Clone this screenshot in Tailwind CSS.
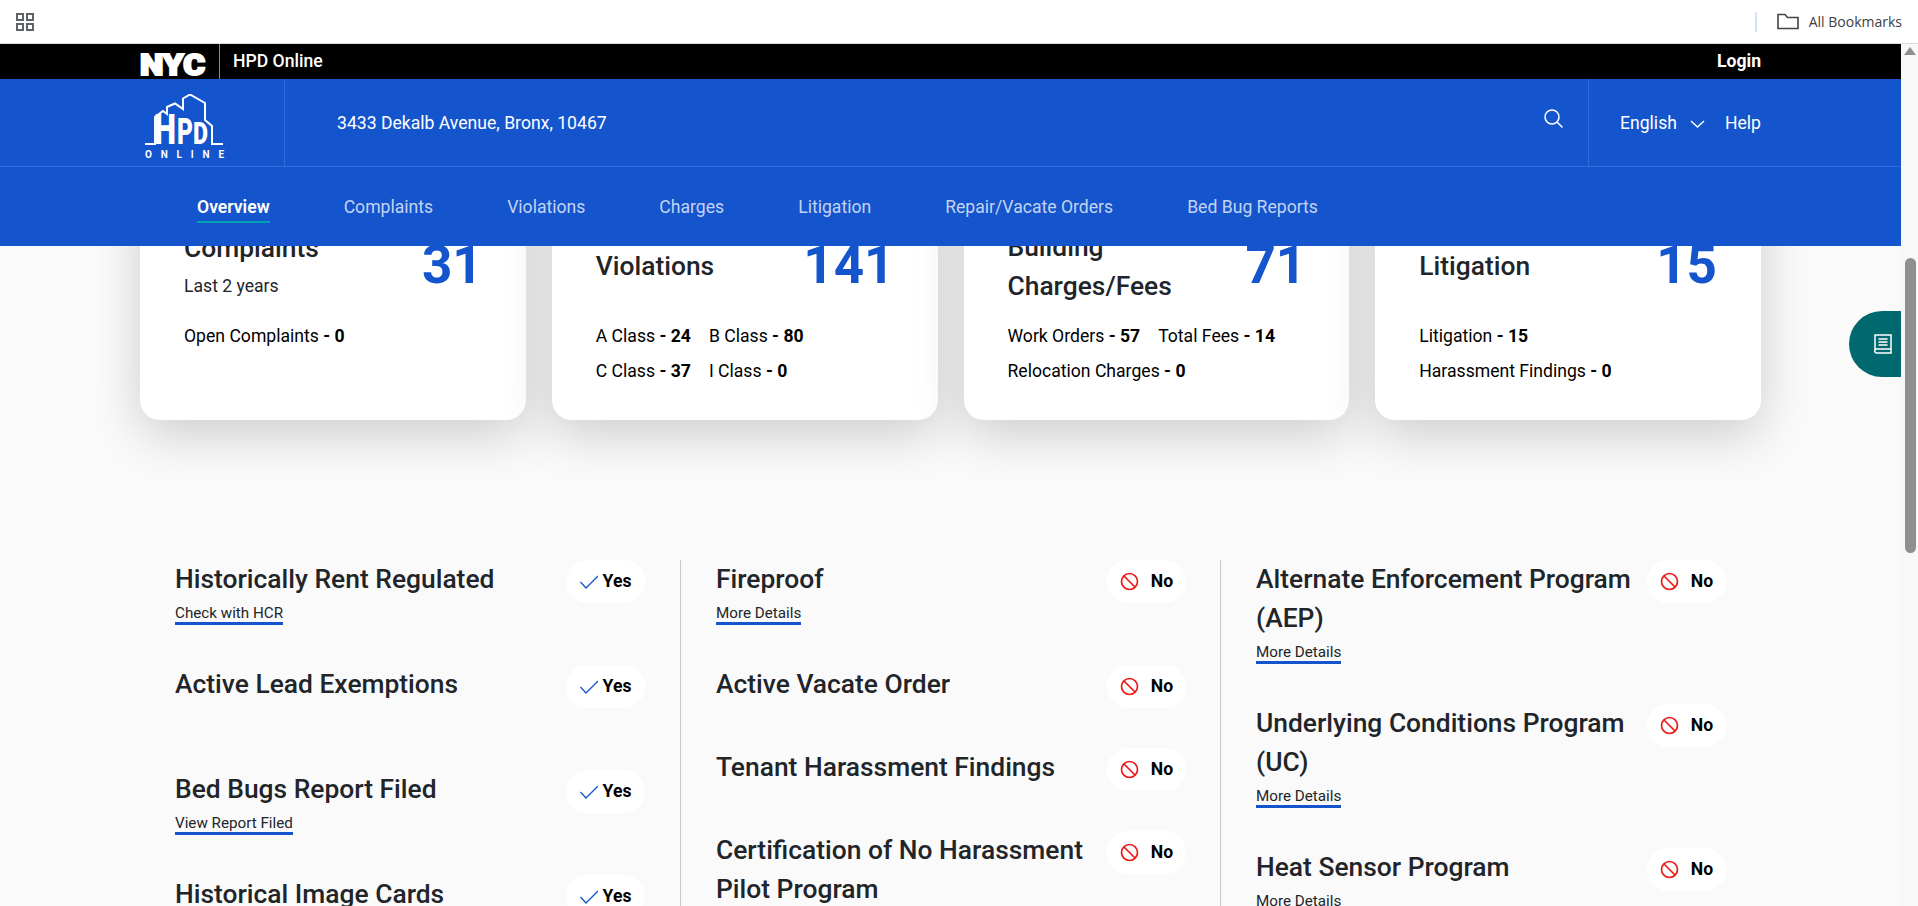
<!DOCTYPE html>
<html lang="en">
<head>
    <meta charset="UTF-8">
    <title>HPD Online</title>
    <script src="https://cdn.jsdelivr.net/npm/@tailwindcss/browser@4"></script>
</head>
<body class="h-[906px] overflow-hidden bg-[#fafafa] font-['Roboto',sans-serif] text-[17.6px] text-[#212529]">
    <!-- browser bookmarks bar -->
    <div class="h-11 bg-white border-b border-[#dcdcdc] flex items-center pl-4 pr-4">
        <svg class="w-[18px] h-[18px] text-[#5f6368]" viewBox="0 0 18 18" fill="none" stroke="currentColor" stroke-width="2"><rect x="1" y="1" width="6" height="6"/><rect x="11" y="1" width="6" height="6"/><rect x="1" y="11" width="6" height="6"/><rect x="11" y="11" width="6" height="6"/></svg>
        <div class="ml-auto w-[2px] h-5 bg-[#d3e3fd]"></div>
        <svg class="ml-5 w-[22px] h-[17px] text-[#444]" viewBox="0 0 22 17" fill="none" stroke="currentColor" stroke-width="1.6"><path d="M1 15.5V1.5h7l2.5 3H21v11z"/></svg>
        <span class="ml-[10px] text-[14px] text-[#3c4043] font-['Open_Sans',sans-serif]">All Bookmarks</span>
    </div>

    <div class="flex h-[862px]">
        <div class="relative flex-1 overflow-hidden">
            <!-- site header -->
            <header class="relative z-10">
                <div class="h-[35px] bg-black flex items-center pl-[140px] pr-[140px] text-white">
                    <svg class="w-[79px] h-[35px] shrink-0" viewBox="0 0 79 35" fill="white" stroke="white" stroke-width="2"><text x="0" y="31" font-family="Roboto" font-weight="900" font-size="29" textLength="65" lengthAdjust="spacingAndGlyphs">NYC</text></svg>
                    <div class="w-px h-[35px] bg-[#888]"></div>
                    <span class="ml-[13px] font-medium">HPD Online</span>
                    <span class="ml-auto font-bold">Login</span>
                </div>
                <div class="bg-[#1454cc] text-white">
                    <div class="h-[88px] flex items-center border-b border-[#2f6bdc]">
                        <div class="w-[285px] h-full border-r border-[#2f6bdc] pl-[145px] pt-[15px]">
                            <svg width="80" height="66" viewBox="0 0 80 66" fill="white">
                                <path d="M0 50H10V23l8-6 4 3v-7l8-3.500 8 5.500V4.500l7-4 15 8.500v17l7 6v18h11" fill="none" stroke="white" stroke-width="2"/>
                                <text x="9" y="50" font-family="Roboto" font-weight="900" font-size="42" textLength="22" lengthAdjust="spacingAndGlyphs">H</text>
                                <text x="32" y="50" font-family="Roboto" font-weight="900" font-size="36" textLength="16" lengthAdjust="spacingAndGlyphs">P</text>
                                <text x="48" y="50" font-family="Roboto" font-weight="900" font-size="32" textLength="15" lengthAdjust="spacingAndGlyphs">D</text>
                                <text x="0" y="64" font-family="Roboto" font-weight="700" font-size="10" textLength="79">ONLINE</text>
                            </svg>
                        </div>
                        <span class="ml-[52px] pt-[2px]">3433 Dekalb Avenue, Bronx, 10467</span>
                        <svg class="ml-auto mb-[10px] w-5 h-5" viewBox="0 0 20 20" fill="none" stroke="currentColor" stroke-width="1.500" stroke-linecap="round"><circle cx="9" cy="9" r="7"/><path d="M14 14l5 5"/></svg>
                        <div class="ml-[25px] h-full w-[313px] border-l border-[#2f6bdc] flex items-center pt-[2px] pl-[31px] pr-[140px]">
                            <span>English</span>
                            <svg class="ml-[13px] w-[15px] h-2" viewBox="0 0 15 8" fill="none" stroke="currentColor" stroke-width="1.500"><path d="M1 1l6.500 6L14 1"/></svg>
                            <span class="ml-auto">Help</span>
                        </div>
                    </div>
                    <nav class="h-[79px] flex pl-[197px] pt-[27px] gap-[74px] text-[#c3d3f2]">
                        <a class="h-[29px] font-semibold text-white border-b-2 border-[#00a3b4]">Overview</a>
                        <a>Complaints</a>
                        <a>Violations</a>
                        <a>Charges</a>
                        <a>Litigation</a>
                        <a>Repair/Vacate Orders</a>
                        <a>Bed Bug Reports</a>
                    </nav>
                </div>
            </header>

            <!-- summary cards, scrolled partly under the header -->
            <section class="-mt-[66px] grid grid-cols-4 gap-[26px] pl-[140px] pr-[140px]">
                <div class="h-[240px] bg-white rounded-[20px] shadow-[0_15px_50px_rgba(0,0,0,0.18)] pl-11 pr-11 pt-[49px] relative">
                    <h2 class="text-[26.4px] leading-[39px] font-medium">Complaints</h2>
                    <p class="mt-[5px]">Last 2 years</p>
                    <p class="mt-[24px] text-black">Open Complaints <b class="font-bold">- 0</b></p>
                    <span class="absolute right-[43px] top-[57px] text-[53px] leading-[56px] font-bold text-[#1454cc]">31</span>
                </div>
                <div class="h-[240px] bg-white rounded-[20px] shadow-[0_15px_50px_rgba(0,0,0,0.18)] pl-11 pr-11 pt-[67px] relative">
                    <h2 class="text-[26.4px] leading-[39px] font-medium">Violations</h2>
                    <p class="mt-[33px] leading-[35px] flex gap-[18px] text-black"><span>A Class <b class="font-bold">- 24</b></span><span>B Class <b class="font-bold">- 80</b></span></p>
                    <p class="leading-[35px] flex gap-[18px] text-black"><span>C Class <b class="font-bold">- 37</b></span><span>I Class <b class="font-bold">- 0</b></span></p>
                    <span class="absolute right-[43px] top-[57px] text-[53px] leading-[56px] font-bold text-[#1454cc]">141</span>
                </div>
                <div class="h-[240px] bg-white rounded-[20px] shadow-[0_15px_50px_rgba(0,0,0,0.18)] pl-11 pr-11 pt-[48px] relative">
                    <h2 class="text-[26.4px] leading-[39px] font-medium">Building<br>Charges/Fees</h2>
                    <p class="mt-[13px] leading-[35px] flex gap-[18px] text-black"><span>Work Orders <b class="font-bold">- 57</b></span><span>Total Fees <b class="font-bold">- 14</b></span></p>
                    <p class="leading-[35px] text-black">Relocation Charges <b class="font-bold">- 0</b></p>
                    <span class="absolute right-[43px] top-[57px] text-[53px] leading-[56px] font-bold text-[#1454cc]">71</span>
                </div>
                <div class="h-[240px] bg-white rounded-[20px] shadow-[0_15px_50px_rgba(0,0,0,0.18)] pl-11 pr-11 pt-[67px] relative">
                    <h2 class="text-[26.4px] leading-[39px] font-medium">Litigation</h2>
                    <p class="mt-[33px] leading-[35px] text-black">Litigation <b class="font-bold">- 15</b></p>
                    <p class="leading-[35px] text-black">Harassment Findings <b class="font-bold">- 0</b></p>
                    <span class="absolute right-[44px] top-[57px] text-[53px] leading-[56px] font-bold text-[#1454cc]">15</span>
                </div>
            </section>

            <!-- building status lists -->
            <section class="mt-[140px] flex pl-[175px] h-[400px]">
                <div class="w-[506px] pr-[35px] border-r border-[#c8c8c8]">
                    <div class="flex justify-between mb-10"><div><h3 class="text-[26.4px] leading-[39px] font-medium">Historically Rent Regulated</h3><a class="block w-fit h-[26px] pt-[3px] text-[15.2px] leading-[22px] border-b-[3px] border-[#1454cc]">Check with HCR</a></div><span class="h-[43px] w-[79px] rounded-[21px] bg-white shrink-0 flex items-center justify-center gap-[5px] font-bold text-black"><svg class="w-[18px] h-[14px] text-[#1454cc]" viewBox="0 0 18 14" fill="none" stroke="currentColor" stroke-width="1.300"><path d="M0.500 7l5.500 6L18 1"/></svg>Yes</span></div>
                    <div class="flex justify-between mb-10"><div><h3 class="text-[26.4px] leading-[39px] font-medium">Active Lead Exemptions</h3><div class="h-[26px]"></div></div><span class="h-[43px] w-[79px] rounded-[21px] bg-white shrink-0 flex items-center justify-center gap-[5px] font-bold text-black"><svg class="w-[18px] h-[14px] text-[#1454cc]" viewBox="0 0 18 14" fill="none" stroke="currentColor" stroke-width="1.300"><path d="M0.500 7l5.500 6L18 1"/></svg>Yes</span></div>
                    <div class="flex justify-between mb-10"><div><h3 class="text-[26.4px] leading-[39px] font-medium">Bed Bugs Report Filed</h3><a class="block w-fit h-[26px] pt-[3px] text-[15.2px] leading-[22px] border-b-[3px] border-[#1454cc]">View Report Filed</a></div><span class="h-[43px] w-[79px] rounded-[21px] bg-white shrink-0 flex items-center justify-center gap-[5px] font-bold text-black"><svg class="w-[18px] h-[14px] text-[#1454cc]" viewBox="0 0 18 14" fill="none" stroke="currentColor" stroke-width="1.300"><path d="M0.500 7l5.500 6L18 1"/></svg>Yes</span></div>
                    <div class="flex justify-between mb-10"><div><h3 class="text-[26.4px] leading-[39px] font-medium">Historical Image Cards</h3></div><span class="h-[43px] w-[79px] rounded-[21px] bg-white shrink-0 flex items-center justify-center gap-[5px] font-bold text-black"><svg class="w-[18px] h-[14px] text-[#1454cc]" viewBox="0 0 18 14" fill="none" stroke="currentColor" stroke-width="1.300"><path d="M0.500 7l5.500 6L18 1"/></svg>Yes</span></div>
                </div>
                <div class="w-[540px] pl-[35px] pr-[34px] border-r border-[#c8c8c8]">
                    <div class="flex justify-between mb-10"><div><h3 class="text-[26.4px] leading-[39px] font-medium">Fireproof</h3><a class="block w-fit h-[26px] pt-[3px] text-[15.2px] leading-[22px] border-b-[3px] border-[#1454cc]">More Details</a></div><span class="h-[43px] w-[79px] rounded-[21px] bg-white shrink-0 flex items-center justify-center gap-[12px] font-bold text-black"><svg class="w-[19px] h-[19px] text-[#f01818]" viewBox="0 0 19 19" fill="none" stroke="currentColor" stroke-width="1.700"><circle cx="9.500" cy="9.500" r="8"/><path d="M4 4l11 11"/></svg>No</span></div>
                    <div class="flex justify-between mb-10"><h3 class="text-[26.4px] leading-[39px] font-medium">Active Vacate Order</h3><span class="h-[43px] w-[79px] rounded-[21px] bg-white shrink-0 flex items-center justify-center gap-[12px] font-bold text-black"><svg class="w-[19px] h-[19px] text-[#f01818]" viewBox="0 0 19 19" fill="none" stroke="currentColor" stroke-width="1.700"><circle cx="9.500" cy="9.500" r="8"/><path d="M4 4l11 11"/></svg>No</span></div>
                    <div class="flex justify-between mb-10"><h3 class="text-[26.4px] leading-[39px] font-medium">Tenant Harassment Findings</h3><span class="h-[43px] w-[79px] rounded-[21px] bg-white shrink-0 flex items-center justify-center gap-[12px] font-bold text-black"><svg class="w-[19px] h-[19px] text-[#f01818]" viewBox="0 0 19 19" fill="none" stroke="currentColor" stroke-width="1.700"><circle cx="9.500" cy="9.500" r="8"/><path d="M4 4l11 11"/></svg>No</span></div>
                    <div class="flex justify-between mb-10 gap-4"><h3 class="text-[26.4px] leading-[39px] font-medium">Certification of No Harassment Pilot Program</h3><span class="h-[43px] w-[79px] rounded-[21px] bg-white shrink-0 flex items-center justify-center gap-[12px] font-bold text-black"><svg class="w-[19px] h-[19px] text-[#f01818]" viewBox="0 0 19 19" fill="none" stroke="currentColor" stroke-width="1.700"><circle cx="9.500" cy="9.500" r="8"/><path d="M4 4l11 11"/></svg>No</span></div>
                </div>
                <div class="w-[505px] pl-[35px]">
                    <div class="flex justify-between mb-10 gap-3"><div><h3 class="text-[26.4px] leading-[39px] font-medium">Alternate Enforcement Program (AEP)</h3><a class="block w-fit h-[26px] pt-[3px] text-[15.2px] leading-[22px] border-b-[3px] border-[#1454cc]">More Details</a></div><span class="h-[43px] w-[79px] rounded-[21px] bg-white shrink-0 flex items-center justify-center gap-[12px] font-bold text-black"><svg class="w-[19px] h-[19px] text-[#f01818]" viewBox="0 0 19 19" fill="none" stroke="currentColor" stroke-width="1.700"><circle cx="9.500" cy="9.500" r="8"/><path d="M4 4l11 11"/></svg>No</span></div>
                    <div class="flex justify-between mb-10 gap-3"><div><h3 class="text-[26.4px] leading-[39px] font-medium">Underlying Conditions Program (UC)</h3><a class="block w-fit h-[26px] pt-[3px] text-[15.2px] leading-[22px] border-b-[3px] border-[#1454cc]">More Details</a></div><span class="h-[43px] w-[79px] rounded-[21px] bg-white shrink-0 flex items-center justify-center gap-[12px] font-bold text-black"><svg class="w-[19px] h-[19px] text-[#f01818]" viewBox="0 0 19 19" fill="none" stroke="currentColor" stroke-width="1.700"><circle cx="9.500" cy="9.500" r="8"/><path d="M4 4l11 11"/></svg>No</span></div>
                    <div class="flex justify-between mb-10 gap-3"><div><h3 class="text-[26.4px] leading-[39px] font-medium">Heat Sensor Program</h3><a class="block w-fit h-[26px] pt-[3px] text-[15.2px] leading-[22px] border-b-[3px] border-[#1454cc]">More Details</a></div><span class="h-[43px] w-[79px] rounded-[21px] bg-white shrink-0 flex items-center justify-center gap-[12px] font-bold text-black"><svg class="w-[19px] h-[19px] text-[#f01818]" viewBox="0 0 19 19" fill="none" stroke="currentColor" stroke-width="1.700"><circle cx="9.500" cy="9.500" r="8"/><path d="M4 4l11 11"/></svg>No</span></div>
                </div>
            </section>

            <!-- side tab -->
            <div class="absolute right-0 top-[267px] z-20 w-[52px] h-[66px] bg-[#00696f] rounded-l-[33px] flex items-center justify-center pl-[16px]">
                <svg class="w-[18px] h-[20px] text-white" viewBox="0 0 18 20" fill="none" stroke="currentColor" stroke-width="1.500"><path d="M1 16V1h16v18H3a2 2 0 0 1-2-3 2 2 0 0 1 2-1h14"/><path d="M4.500 5h9M4.500 8h9M4.500 11h9"/></svg>
            </div>
        </div>

        <!-- page scrollbar -->
        <div class="relative w-[17px] bg-[#f8f8f8]">
            <div class="absolute left-[3px] top-[3px] w-0 h-0 border-l-[6px] border-r-[6px] border-b-[8px] border-l-transparent border-r-transparent border-b-[#8f8f8f]"></div>
            <div class="absolute left-[4px] top-[214px] w-[11px] h-[295px] rounded-full bg-[#8f8f8f]"></div>
        </div>
    </div>
</body>
</html>
